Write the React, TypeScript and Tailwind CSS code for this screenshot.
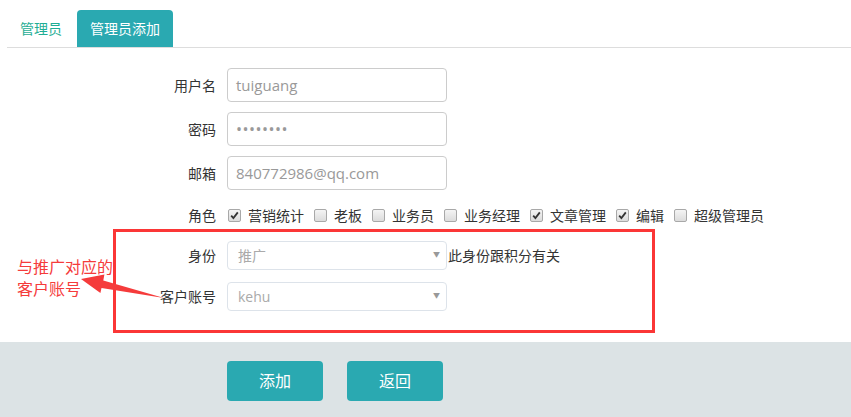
import React from "react";

const font = { fontFamily: '"Open Sans", "Noto Sans CJK SC", sans-serif' };

function Box({ checked }: { checked: boolean }) {
  return (
    <span className="inline-flex h-[13px] w-[13px] shrink-0 items-center justify-center rounded-[2px] border border-[#a8a8a8] bg-gradient-to-b from-[#f4f4f4] to-[#dcdcdc]">
      {checked && (
        <svg width="9" height="9" viewBox="0 0 9 9">
          <path d="M1.2 4.6 L3.4 7 L7.8 1.4" fill="none" stroke="#333" strokeWidth="1.8" />
        </svg>
      )}
    </span>
  );
}

const roles: [string, boolean][] = [
  ["营销统计", true],
  ["老板", false],
  ["业务员", false],
  ["业务经理", false],
  ["文章管理", true],
  ["编辑", true],
  ["超级管理员", false],
];

function Row({ label, children }: { label: string; children: React.ReactNode }) {
  return (
    <div className="flex items-center">
      <div className="w-[216px] shrink-0 text-right text-[14px] text-[#333]">{label}</div>
      <div className="ml-[11px] flex items-center">{children}</div>
    </div>
  );
}

function Input({ value, pw }: { value: string; pw?: boolean }) {
  return (
    <div className="flex h-[34px] w-[220px] items-center rounded-[4px] border border-[#cccccc] px-[8px] text-[15px] text-[#999]">
      {pw ? <span className="text-[16px] tracking-[0.5px]">••••••••</span> : value}
    </div>
  );
}

function Select({ value }: { value: string }) {
  return (
    <div className="flex h-[29px] w-[220px] items-center justify-between rounded-[4px] border border-[#dde3ea] pl-[10px] pr-[6px] text-[14px] text-[#aaa]">
      <span>{value}</span>
      <span className="text-[7px] text-[#999]">▼</span>
    </div>
  );
}

export default function App() {
  return (
    <div className="relative h-[417px] w-[851px] overflow-hidden bg-white" style={font}>
      {/* tabs */}
      <div className="ml-[7px] mt-[10px] flex h-[38px] items-end border-b border-[#dddddd]">
        <div className="flex h-[37px] items-center pl-[13px] pr-[15px] text-[14px] text-[#1fae95]">管理员</div>
        <div className="flex h-[37px] items-center rounded-t-[4px] bg-[#2aa9b1] px-[13px] text-[14px] text-white">
          管理员添加
        </div>
      </div>

      {/* form */}
      <div className="mt-[20px] flex flex-col">
        <div className="flex flex-col gap-[10px]">
          <Row label="用户名">
            <Input value="tuiguang" />
          </Row>
          <Row label="密码">
            <Input value="" pw />
          </Row>
          <Row label="邮箱">
            <Input value="840772986@qq.com" />
          </Row>
        </div>

        <div className="mt-[15px] flex h-[20px] items-center">
          <div className="w-[216px] shrink-0 text-right text-[14px] text-[#333]">角色</div>
          <div className="ml-[12px] flex items-center text-[14px] text-[#333]">
            {roles.map(([name, c]) => (
              <div key={name} className="mr-[10px] flex items-center">
                <Box checked={c} />
                <span className="ml-[7px]">{name}</span>
              </div>
            ))}
          </div>
        </div>

        <div className="mt-[16px] flex flex-col gap-[12px]">
          <Row label="身份">
            <Select value="推广" />
            <span className="ml-[1px] text-[14px] text-[#333]">此身份跟积分有关</span>
          </Row>
          <Row label="客户账号">
            <Select value="kehu" />
          </Row>
        </div>
      </div>

      {/* footer */}
      <div className="absolute bottom-0 left-0 right-0 flex h-[75px] gap-[24px] bg-[#dce3e5] pl-[227px] pt-[19px]">
        <button className="h-[40px] w-[96px] rounded-[4px] bg-[#2aa9b1] text-[16px] text-white">添加</button>
        <button className="h-[40px] w-[96px] rounded-[4px] bg-[#2aa9b1] text-[16px] text-white">返回</button>
      </div>

      {/* annotation */}
      <div className="absolute left-[113px] top-[229px] h-[104px] w-[542px] border-[3px] border-[#fb3636]" />
      <div className="absolute left-[17px] top-[256px] text-[16px] leading-[22px] text-[#f53b3b]">
        与推广对应的
        <br />
        客户账号
      </div>
      <svg className="absolute left-0 top-0" width="851" height="417" viewBox="0 0 851 417">
        <polygon
          points="81,279 104.4,274.5 103.3,280.5 164,298 101.5,287.9 100.4,293"
          fill="#f53b3b"
        />
      </svg>
    </div>
  );
}
